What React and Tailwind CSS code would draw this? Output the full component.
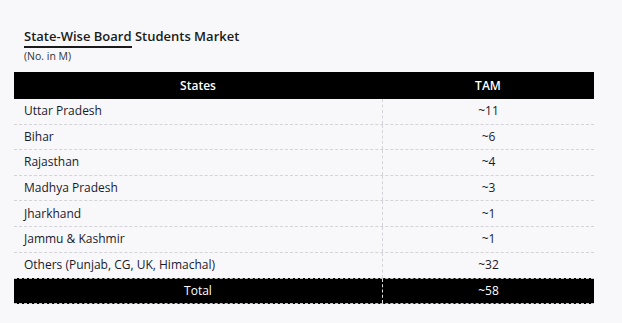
const rows = [
  ['Uttar Pradesh', '~11'],
  ['Bihar', '~6'],
  ['Rajasthan', '~4'],
  ['Madhya Pradesh', '~3'],
  ['Jharkhand', '~1'],
  ['Jammu & Kashmir', '~1'],
  ['Others (Punjab, CG, UK, Himachal)', '~32'],
];

const App = () => {
  return (
    <div className="w-[622px] h-[323px] bg-[#f8f8fa] font-['Open_Sans',sans-serif] text-[#1a1a2e] pt-[28px]">
      <div className="pl-[24px]">
        <h1 className="text-[13px] font-semibold leading-[16px] text-[#1b1b1b]">State-Wise Board Students Market</h1>
        <div className="w-[108px] h-[2px] bg-[#1b1b1b] mt-[2px]"></div>
        <p className="text-[10.5px] leading-[12px] mt-[2px] text-[#333]">(No. in M)</p>
      </div>
      <div className="ml-[14px] w-[580px] mt-[10px] text-[12px] font-medium">
        <div className="flex h-[27px] bg-black text-white font-semibold items-center">
          <div className="w-[368px] text-center">States</div>
          <div className="flex-1 text-center">TAM</div>
        </div>
        {rows.map(([s, v], i) => (
          <div key={s} className={`flex h-[25.6px] items-center ${i < rows.length - 1 ? 'border-b border-dashed border-[#d4d4d8]' : ''}`}>
            <div className="w-[368px] pl-[10px] h-full flex items-center">{s}</div>
            <div className="flex-1 h-full flex items-center justify-center border-l border-dashed border-[#d4d4d8]">{v}</div>
          </div>
        ))}
        <div className="flex h-[26px] bg-black text-white items-center border-y border-dashed border-[#c8c8c8]">
          <div className="w-[368px] text-center h-full flex items-center justify-center">Total</div>
          <div className="flex-1 h-full flex items-center justify-center border-l border-dashed border-[#e0e0e0]">~58</div>
        </div>
      </div>
    </div>
  );
};

export default App;
